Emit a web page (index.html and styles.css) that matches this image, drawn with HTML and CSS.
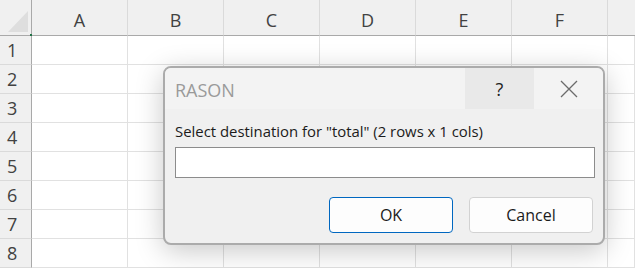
FILE: index.html
```html
<!DOCTYPE html>
<html lang="en">
<head>
    <meta charset="UTF-8">
    <meta name="viewport" content="width=device-width, initial-scale=1.0">
    <title>RASON</title>
    <link rel="stylesheet" href="styles.css">
</head>
<body>
    <div class="sheet">
        <div class="corner"><span class="tri"></span><span class="dot"></span></div>
        <div class="col-head">A</div>
        <div class="col-head">B</div>
        <div class="col-head">C</div>
        <div class="col-head">D</div>
        <div class="col-head">E</div>
        <div class="col-head">F</div>
        <div class="col-head last"></div>

        <div class="row-head">1</div><div class="cell"></div><div class="cell"></div><div class="cell"></div><div class="cell"></div><div class="cell"></div><div class="cell"></div><div class="cell"></div>
        <div class="row-head">2</div><div class="cell"></div><div class="cell"></div><div class="cell"></div><div class="cell"></div><div class="cell"></div><div class="cell"></div><div class="cell"></div>
        <div class="row-head">3</div><div class="cell"></div><div class="cell"></div><div class="cell"></div><div class="cell"></div><div class="cell"></div><div class="cell"></div><div class="cell"></div>
        <div class="row-head">4</div><div class="cell"></div><div class="cell"></div><div class="cell"></div><div class="cell"></div><div class="cell"></div><div class="cell"></div><div class="cell"></div>
        <div class="row-head">5</div><div class="cell"></div><div class="cell"></div><div class="cell"></div><div class="cell"></div><div class="cell"></div><div class="cell"></div><div class="cell"></div>
        <div class="row-head">6</div><div class="cell"></div><div class="cell"></div><div class="cell"></div><div class="cell"></div><div class="cell"></div><div class="cell"></div><div class="cell"></div>
        <div class="row-head">7</div><div class="cell"></div><div class="cell"></div><div class="cell"></div><div class="cell"></div><div class="cell"></div><div class="cell"></div><div class="cell"></div>
        <div class="row-head">8</div><div class="cell"></div><div class="cell"></div><div class="cell"></div><div class="cell"></div><div class="cell"></div><div class="cell"></div><div class="cell"></div>
    </div>

    <div class="dialog">
        <div class="titlebar">
            <div class="title">RASON</div>
            <div class="help-btn">?</div>
            <div class="close-btn">
                <svg width="18" height="18" viewBox="0 0 18 18">
                    <path d="M1 1 L17 17 M17 1 L1 17" stroke="#6b6b6b" stroke-width="1.3" fill="none"/>
                </svg>
            </div>
        </div>
        <div class="dialog-body">
            <div class="label">Select destination for "total" (2 rows x 1 cols)</div>
            <input type="text" class="dest-input">
            <div class="buttons">
                <button class="btn ok-btn">OK</button>
                <button class="btn cancel-btn">Cancel</button>
            </div>
        </div>
    </div>
</body>
</html>
```

FILE: styles.css
```css
body { margin: 0; padding: 0; background: white; font-family: "Open Sans", "Noto Sans", sans-serif; overflow: hidden; }

/* Spreadsheet grid */
.sheet { display: grid; grid-template-columns: 32px repeat(6, 96px) 1fr; grid-template-rows: 36px repeat(8, 29px); }
.corner { position: relative; background: #f0f0f0; border-right: 1px solid #a9a9a9; border-bottom: 1px solid #a9a9a9; }
.corner .tri { position: absolute; left: 8px; top: 11px; width: 0; height: 0; border-left: 20px solid transparent; border-bottom: 21px solid #dedede; }
.corner .dot { position: absolute; right: -1px; bottom: -1px; width: 2px; height: 2px; background: #217346; }
.col-head { background: #f0f0f0; border-right: 1px solid #dadada; border-bottom: 1px solid #a9a9a9; color: #424242; font-size: 18px; display: flex; align-items: center; justify-content: center; padding-top: 4px; box-sizing: border-box; }
.col-head.last { border-right: none; }
.row-head { background: #f0f0f0; border-right: 1px solid #a9a9a9; border-bottom: 1px solid #dadada; color: #424242; font-size: 18px; display: flex; align-items: center; padding-left: 7px; }
.cell { border-right: 1px solid #e1e1e1; border-bottom: 1px solid #e1e1e1; }

/* Dialog over the sheet */
.dialog { position: absolute; left: 163px; top: 66px; width: 442px; height: 179px; box-sizing: border-box; background: #f0f0f0; border: 2px solid #ababab; border-radius: 8px; overflow: hidden; box-shadow: 0 6px 28px rgba(0,0,0,0.22); }
.titlebar { display: flex; height: 41px; background: #f3f3f3; }
.title { flex: 1; padding-left: 10px; color: #9a9a9a; font-size: 18px; display: flex; align-items: center; padding-top: 2px; }
.help-btn { width: 69px; background: #e9e9e9; color: #222; font-size: 18px; display: flex; align-items: center; justify-content: center; padding-top: 1px; }
.close-btn { width: 69px; display: flex; align-items: center; justify-content: center; }

.dialog-body { padding: 11px 9px 0 10px; }
.label { font-size: 14.9px; color: #1b1b1b; line-height: 22px; }
.dest-input { display: block; box-sizing: border-box; width: 420px; height: 31px; margin-top: 5px; border: 1px solid #8c8c8c; background: white; outline: none; }
.buttons { display: flex; justify-content: flex-end; gap: 16px; margin-top: 19px; padding-right: 1px; }
.btn { width: 124px; height: 36px; box-sizing: border-box; border-radius: 4px; font-family: inherit; font-size: 16px; color: #1b1b1b; background: #fdfdfd; cursor: pointer; }
.ok-btn { border: 1px solid #0067c0; }
.cancel-btn { border: 1px solid #d2d2d2; }
```
